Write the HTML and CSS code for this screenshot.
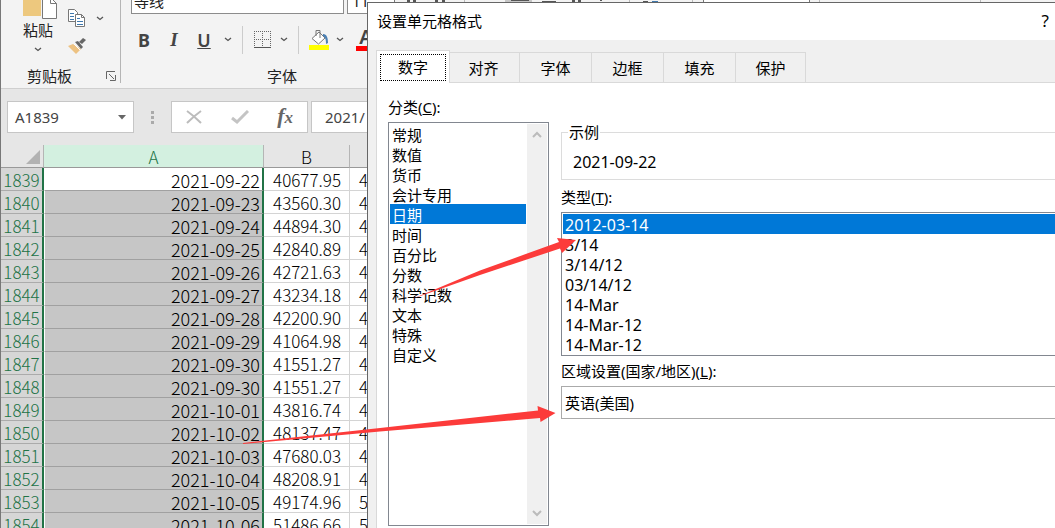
FILE: index.html
```html
<!DOCTYPE html>
<html lang="zh-CN">
<head>
<meta charset="utf-8">
<title>设置单元格格式</title>
<link rel="stylesheet" href="styles.css">
</head>
<body>
<main class="excel">
  <section class="ribbon">
    <div class="group clipboard">
      <div class="clip-tools">
        <button class="paste">
          <svg width="40" height="30" viewBox="0 0 40 30"><path fill="#edc87e" d="M5 0h18v27H5z"/><path fill="#fff" stroke="#777" d="M24.500 8.500h8l6 6v15h-14z"/><path fill="none" stroke="#777" d="M32.500 8.500v6h6"/></svg>
          <span>粘贴</span>
          <svg class="chev" width="8" height="5" viewBox="0 0 8 5"><path d="M1 1l3 2.500L7 1"/></svg>
        </button>
        <div class="clip-side">
          <div class="copy-row">
            <button aria-label="复制"><svg width="18" height="19" viewBox="0 0 18 19"><g fill="#fff" stroke="#777"><path d="M.5.500h6l3 3v9h-9z"/><path d="M7.500 5.500h6l3 3v9h-9z"/><path fill="none" d="M13.500 5.500v3h3"/></g><path stroke="#3f78ad" d="M2 4.500h4M2 7.500h4M2 10.500h4M9 9.500h3M9 12.500h6M9 15.500h6"/></svg></button>
            <button aria-label="复制选项"><svg class="chev" width="8" height="5" viewBox="0 0 8 5"><path d="M1 1l3 2.500L7 1"/></svg></button>
          </div>
          <button aria-label="格式刷"><svg width="18" height="16" viewBox="0 0 18 16"><path fill="#edc282" d="M0 8l5-2 8 5-5 5z"/><path stroke="#fff" d="M6 6l6 6"/><path fill="#666" d="M7 4l3-1 5 6-2 2zM11 4l4-4 3 2-4 4z"/></svg></button>
        </div>
      </div>
      <div class="caption">剪贴板<button class="launcher" aria-label="剪贴板选项"><svg width="10" height="10" viewBox="0 0 10 10"><path fill="none" stroke="#666" d="M.5 8V.500H9M3 3l5 5M9.500 4v5.500H4"/></svg></button></div>
    </div>
    <div class="group font">
      <div class="font-boxes"><button class="fontname">等线</button><button class="fontsize">11</button></div>
      <div class="font-tools">
        <button class="wide bold">B</button><button class="wide italic">I</button><button class="wide under">U</button>
        <button class="drop" aria-label="下划线选项"><svg class="chev" width="8" height="5" viewBox="0 0 8 5"><path d="M1 1l3 2.500L7 1"/></svg></button>
        <i class="rule"></i>
        <button class="pic" aria-label="边框"><svg width="18" height="18" viewBox="0 0 18 18"><path fill="none" stroke="#666" stroke-dasharray="1 1" d="M.5 0v16M8.500 0v16M16.500 0v16M0 .500h17M0 8.500h17"/><path stroke="#555" d="M0 16.500h17"/></svg></button>
        <button class="drop" aria-label="边框选项"><svg class="chev" width="8" height="5" viewBox="0 0 8 5"><path d="M1 1l3 2.500L7 1"/></svg></button>
        <i class="rule"></i>
        <button class="pic" aria-label="填充颜色"><svg width="20" height="20" viewBox="0 0 20 20"><path fill="#ff0" d="M0 15h20v5H0z"/><path fill="#fff" stroke="#777" d="M3 8.500L10 2l6 6-6.500 6z"/><path fill="none" stroke="#777" d="M7 6V.500h4V8"/><path fill="#4b80b4" d="M14 4c4 0 5 4 5 9l-2 1c0-5-1-7-3-8z"/></svg></button>
        <button class="drop" aria-label="填充选项"><svg class="chev" width="8" height="5" viewBox="0 0 8 5"><path d="M1 1l3 2.500L7 1"/></svg></button>
        <button class="fontcolor">A</button>
      </div>
      <div class="caption">字体</div>
    </div>
    <svg class="ribbon-rest" width="687" height="3" viewBox="368 0 687 3"><path fill="#fff" d="M368 0h26v3h-26zM703 0h106v3H703z"/><path fill="#c6c6c6" d="M505 0h27v3h-27z"/><path fill="#555" d="M407 0h3v2h-3zM413 0h3v2h-3zM435 0h3v2h-3zM442 0h3v2h-3zM511 0h18v1h-18zM542 1h14v1h-14zM572 0h3v2h-3zM578 0h3v2h-3zM600 0h2v1h-2zM643 1h5v1h-5z"/><path fill="#3f78ad" d="M652 1h6v1h-6z"/><path stroke="#bbb" d="M464.500 0v3M629.500 0v3M692.500 0v3M819.500 0v3M980.500 0v3"/><path stroke="#777" d="M394.500 0v3M703.500 0v3M809.500 0v3"/></svg>
  </section>

  <section class="formula">
    <button class="namebox"><span>A1839</span><svg width="8" height="5" viewBox="0 0 8 5"><path fill="#666" d="M0 0h8L4 4.500z"/></svg></button>
    <svg class="grip" width="3" height="13" viewBox="0 0 3 13"><path fill="#aaa" d="M0 0h3v3H0zM0 5h3v3H0zM0 10h3v3H0z"/></svg>
    <div class="fx-box">
      <button aria-label="取消"><svg width="16" height="14" viewBox="0 0 16 14"><path fill="none" stroke="#bcbcbc" stroke-width="2" d="M1 1q7 5 14 12M15 1Q8 6 1 13"/></svg></button>
      <button aria-label="输入"><svg width="18" height="14" viewBox="0 0 18 14"><path fill="none" stroke="#c4c4c4" stroke-width="3" d="M1 8l5 4L17 1"/></svg></button>
      <button class="fx" aria-label="插入函数">f<span>x</span></button>
    </div>
    <input class="formula-input" aria-label="编辑栏" value="2021/">
  </section>

  <table class="sheet">
    <thead><tr><th class="corner"><svg width="14" height="14" viewBox="0 0 14 14"><path fill="#b2b2b2" d="M14 0v14H0z"/></svg></th><th class="a">A</th><th>B</th><th></th></tr></thead>
    <tbody>
      <tr class="active"><th>1839</th><td>2021-09-22</td><td>40677.95</td><td>4</td></tr>
      <tr><th>1840</th><td>2021-09-23</td><td>43560.30</td><td>4</td></tr>
      <tr><th>1841</th><td>2021-09-24</td><td>44894.30</td><td>4</td></tr>
      <tr><th>1842</th><td>2021-09-25</td><td>42840.89</td><td>4</td></tr>
      <tr><th>1843</th><td>2021-09-26</td><td>42721.63</td><td>4</td></tr>
      <tr><th>1844</th><td>2021-09-27</td><td>43234.18</td><td>4</td></tr>
      <tr><th>1845</th><td>2021-09-28</td><td>42200.90</td><td>4</td></tr>
      <tr><th>1846</th><td>2021-09-29</td><td>41064.98</td><td>4</td></tr>
      <tr><th>1847</th><td>2021-09-30</td><td>41551.27</td><td>4</td></tr>
      <tr><th>1848</th><td>2021-09-30</td><td>41551.27</td><td>4</td></tr>
      <tr><th>1849</th><td>2021-10-01</td><td>43816.74</td><td>4</td></tr>
      <tr><th>1850</th><td>2021-10-02</td><td>48137.47</td><td>4</td></tr>
      <tr><th>1851</th><td>2021-10-03</td><td>47680.03</td><td>4</td></tr>
      <tr><th>1852</th><td>2021-10-04</td><td>48208.91</td><td>4</td></tr>
      <tr><th>1853</th><td>2021-10-05</td><td>49174.96</td><td>5</td></tr>
      <tr><th>1854</th><td>2021-10-06</td><td>51486.66</td><td>5</td></tr>
    </tbody>
  </table>
</main>

<section class="dialog" role="dialog" aria-labelledby="dlg-title">
  <header class="titlebar"><h1 id="dlg-title">设置单元格格式</h1><button class="help">?</button></header>
  <nav class="tabs">
    <button class="tab on"><span>数字</span></button><button class="tab">对齐</button><button class="tab">字体</button><button class="tab">边框</button><button class="tab">填充</button><button class="tab">保护</button>
  </nav>
  <div class="pane">
    <div class="col-left">
      <label for="category">分类(<u>C</u>):</label>
      <div class="listbox">
        <select id="category" size="12">
          <option>常规</option><option>数值</option><option>货币</option><option>会计专用</option><option selected>日期</option><option>时间</option><option>百分比</option><option>分数</option><option>科学记数</option><option>文本</option><option>特殊</option><option>自定义</option>
        </select>
        <div class="scroll">
          <svg width="10" height="7" viewBox="0 0 10 7"><path d="M1 6l4-4 4 4"/></svg>
          <svg width="10" height="7" viewBox="0 0 10 7"><path d="M1 1l4 4 4-4"/></svg>
        </div>
      </div>
    </div>
    <div class="col-right">
      <fieldset><legend>示例</legend>2021-09-22</fieldset>
      <label for="type">类型(<u>T</u>):</label>
      <div class="listbox types">
        <select id="type" size="7">
          <option selected>2012-03-14</option><option>3/14</option><option>3/14/12</option><option>03/14/12</option><option>14-Mar</option><option>14-Mar-12</option><option>14-Mar-12</option>
        </select>
      </div>
      <label for="locale">区域设置(国家/地区)(<u>L</u>):</label>
      <select id="locale" class="locale"><option>英语(美国)</option></select>
    </div>
  </div>
</section>

<svg class="arrows" width="340" height="220" viewBox="240 230 340 220" aria-hidden="true"><g fill="#fc3b3a"><path d="M412 299L480 270.500L559 242l-2-4 19 2-14 13-2-4.500-80 26.500-68 24z"/><path d="M243 443L380 428L538 410.500l-.5-4.500 18 7-15 9-.5-4L380 431.500L243 444z"/></g></svg>
</body>
</html>
```

FILE: styles.css
```css
* { box-sizing: border-box; }
body {
  margin: 0;
  height: 100vh;
  overflow: hidden;
  position: relative;
  font: 15px/20px "Noto Sans", "Noto Sans CJK SC", sans-serif;
  color: #000;
}
button, input, select {
  font: inherit;
  color: inherit;
  margin: 0;
  padding: 0;
  border: 0;
  background: none;
  border-radius: 0;
}
svg { display: block; }
.chev path { fill: none; stroke: #555; stroke-width: 1.3; }

.excel { height: 100%; overflow: hidden; border-left: 1px solid #777; background: #e6e6e6; }

/* Ribbon */
.ribbon {
  display: flex;
  align-items: flex-end;
  height: 89px;
  overflow: hidden;
  background: #f3f3f3;
  border-bottom: 1px solid #cfcfcf;
  color: #222;
}
.group { display: flex; flex-direction: column; flex: none; }
.clipboard { width: 120px; border-right: 1px solid #b5b5b5; margin-bottom: 5px; }
.clip-tools { display: flex; height: 78px; }
.paste { display: flex; flex-direction: column; align-items: center; width: 70px; padding-left: 4px; }
.paste span { line-height: 18px; margin-top: 2px; }
.paste .chev { margin-top: 8px; }
.clip-side { display: flex; flex-direction: column; align-items: flex-start; gap: 10px; padding: 20px 0 0; margin-left: -3px; }
.copy-row { display: flex; align-items: center; gap: 10px; }
.caption { display: flex; justify-content: center; line-height: 22px; }
.clipboard .caption { justify-content: flex-start; padding-left: 26px; height: 16px; line-height: 18px; }
.launcher { margin: 1px 0 0 34px; }
.font { width: 247px; padding: 0 0 1px 10px; }
.font-boxes { display: flex; gap: 3px; }
.fontname, .fontsize { height: 28px; border: 1px solid #8c8c8c; background: #fff; text-align: left; line-height: 28px; flex: none; }
.fontname { width: 213px; padding-left: 2px; }
.fontsize { width: 48px; padding-left: 4px; }
.font-tools { display: flex; align-items: center; height: 51px; margin-left: -2px; }
.font-tools > * { flex: none; }
.wide { width: 30px; font-size: 18px; color: #444; text-align: center; }
.bold { font-weight: 700; }
.italic { font: italic 700 19px "Liberation Serif", serif; }
.under { text-decoration: underline; font-weight: 600; }
.drop { width: 18px; display: flex; justify-content: center; }
.rule { width: 1px; height: 28px; margin: 0 8px 0 5px; background: #ccc; }
.pic { width: 24px; display: flex; justify-content: center; }
.fontcolor { margin-left: 7px; width: 20px; font-size: 20px; line-height: 18px; font-weight: 600; color: #444; border-bottom: 5px solid #f00; }
.font .caption { width: 302px; }
.ribbon-rest { align-self: flex-start; flex: none; }

/* Formula bar */
.formula { display: flex; align-items: center; height: 56px; padding: 0 0 0 6px; color: #444; }
.namebox { display: flex; align-items: center; justify-content: space-between; width: 127px; height: 32px; padding: 0 7px; border: 1px solid #c6c6c6; background: #fff; }
.grip { margin: 0 17px; }
.fx-box { display: flex; align-items: center; justify-content: space-between; width: 137px; height: 32px; padding: 0 14px; border: 1px solid #c6c6c6; background: #fff; }
.fx { font: italic 700 22px/24px "Liberation Serif", serif; color: #666; }
.fx span { font-size: 17px; }
.formula-input { flex: 1; min-width: 0; height: 32px; margin-left: 3px; padding: 0 13px; border: 1px solid #c6c6c6; background: #fff; }

/* Worksheet */
.sheet { width: 100%; table-layout: fixed; border-collapse: separate; border-spacing: 0; background: #fff; font-family: "Noto Sans CJK SC", sans-serif; font-size: 17px; font-weight: 300; line-height: 20px; }
.sheet th { font-weight: inherit; padding: 2px 0 0; }
.sheet thead th { height: 23px; background: #e6e6e6; border-bottom: 1px solid #999; border-right: 1px solid #b5b5b5; }
.sheet thead .corner { width: 43px; }
.corner svg { margin-left: 25px; }
.sheet thead .a { width: 220px; background: #d3f0e0; color: #217346; }
.sheet thead th:nth-child(3) { width: 86px; }
.sheet td { height: 23px; padding: 2px 8px 0 0; text-align: right; border-right: 1px solid #d4d4d4; border-bottom: 1px solid #d4d4d4; }
.sheet tbody th { background: #d6d6d6; color: #217346; border-bottom: 1px solid #ababab; border-right: 2px solid #217346; }
.sheet td:nth-child(2) { font-size: 18px; padding-right: 2px; background: #c6c6c6; border-bottom-color: #a0a0a0; border-right: 2px solid #217346; border-left: 1px solid #fff; }
.sheet td:nth-child(4) { text-align: left; padding-left: 9px; }
.sheet .active td:nth-child(2) { background: #fff; }

/* Format dialog */
.dialog {
  position: absolute;
  left: 367px;
  top: 2px;
  right: 0;
  bottom: 0;
  display: flex;
  flex-direction: column;
  overflow: hidden;
  border: solid #666;
  border-width: 1px 0 0 1px;
  background: #f0f0f0;
}
.titlebar { display: flex; align-items: center; justify-content: space-between; height: 37px; padding: 0 6px 2px 9px; background: #fff; }
.titlebar h1 { margin: 0; font-size: 15px; font-weight: 400; }
.help { font-size: 17px; }
.tabs { display: flex; align-items: flex-end; height: 43px; margin-left: 8px; border-bottom: 1px solid #d9d9d9; }
.tab { width: 72px; height: 30px; border: 1px solid #d9d9d9; border-width: 1px 1px 0 0; }
.tab:last-child { width: 70px; }
.tab.on { position: relative; width: 74px; height: 33px; margin: 0 -2px -1px 0; padding: 3px; border-width: 1px; border-bottom: 0; background: #fff; }
.tab.on span { display: block; height: 27px; line-height: 25px; border: 1px dotted #000; }
.pane { flex: 1; display: flex; gap: 12px; min-height: 0; margin-left: 8px; padding: 14px 0 2px 11px; border-left: 1px solid #d9d9d9; background: #fff; }
.col-left { display: flex; flex-direction: column; width: 161px; }
.col-left label { padding-bottom: 5px; }
.listbox { display: flex; border: 1px solid #828790; padding: 1px; background: #fff; }
.col-left .listbox { flex: 1; min-height: 0; }
.listbox select { flex: 1; min-width: 0; appearance: none; outline: 0; overflow: hidden; scrollbar-width: none; }
.listbox option { height: 20px; min-height: 20px; padding: 0 2px; line-height: 20px; color: #000; }
.listbox option:checked { background: #0078d7 linear-gradient(#0078d7, #0078d7); color: #fff; -webkit-text-fill-color: #fff; }
.scroll { display: flex; flex-direction: column; justify-content: space-between; align-items: center; width: 20px; margin-left: 1px; padding: 7px 0; background: #f0f0f0; }
.scroll path { fill: none; stroke: #bbb; stroke-width: 2; }
.col-right { flex: 1; display: flex; flex-direction: column; margin-right: -8px; }
fieldset { margin: 25px 0 0; padding: 10px 11px 7px; border: 1px solid #dcdcdc; font-size: 16px; }
legend { margin-left: -5px; padding: 0 1px; font-size: 15px; }
.col-right label { padding: 7px 0 5px; }
.types { font-size: 16px; }
.types select { height: 140px; }
.col-right label[for="locale"] { padding: 5px 0; }
.locale { height: 33px; padding: 0 3px; border: 1px solid #aaa; appearance: none; }

.arrows { position: absolute; left: 240px; top: 230px; pointer-events: none; }
```
